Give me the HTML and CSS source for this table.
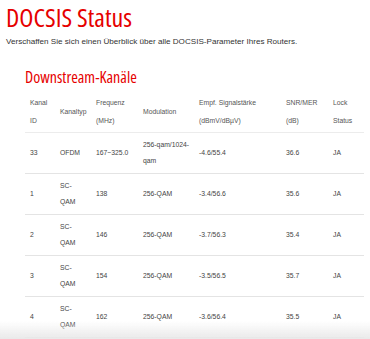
FILE: index.html
```html
<!DOCTYPE html>
<html lang="de">
<head>
<meta charset="utf-8">
<title>DOCSIS Status</title>
<link rel="stylesheet" href="styles.css">
</head>
<body>
<main class="page">
  <h1 class="title">DOCSIS Status</h1>
  <p class="intro">Verschaffen Sie sich einen Überblick über alle DOCSIS-Parameter Ihres Routers.</p>
  <section class="section">
    <h2 class="section-title">Downstream-Kanäle</h2>
    <table class="channels">
      <colgroup>
        <col class="c1"><col class="c2"><col class="c3"><col class="c4"><col class="c5"><col class="c6"><col class="c7">
      </colgroup>
      <thead>
        <tr>
          <th>Kanal ID</th>
          <th>Kanaltyp</th>
          <th>Frequenz (MHz)</th>
          <th>Modulation</th>
          <th>Empf. Signalstärke (dBmV/dBµV)</th>
          <th>SNR/MER (dB)</th>
          <th>Lock Status</th>
        </tr>
      </thead>
      <tbody>
        <tr><td>33</td><td>OFDM</td><td>167~325.0</td><td>256-qam/1024-qam</td><td>-4.6/55.4</td><td>36.6</td><td>JA</td></tr>
        <tr><td>1</td><td>SC-QAM</td><td>138</td><td>256-QAM</td><td>-3.4/56.6</td><td>35.6</td><td>JA</td></tr>
        <tr><td>2</td><td>SC-QAM</td><td>146</td><td>256-QAM</td><td>-3.7/56.3</td><td>35.4</td><td>JA</td></tr>
        <tr><td>3</td><td>SC-QAM</td><td>154</td><td>256-QAM</td><td>-3.5/56.5</td><td>35.7</td><td>JA</td></tr>
        <tr><td>4</td><td>SC-QAM</td><td>162</td><td>256-QAM</td><td>-3.6/56.4</td><td>35.5</td><td>JA</td></tr>
      </tbody>
    </table>
  </section>
</main>
<div class="bottom-fade"></div>
</body>
</html>
```

FILE: styles.css
```css
html, body {
  margin: 0;
  padding: 0;
  background: #fff;
}
body {
  font-family: "Liberation Sans", Arial, sans-serif;
  color: #333;
  overflow: hidden;
}
.page {
  padding: 2px 6px 0 6px;
}
.title {
  margin: 0;
  font-family: "Open Sans", sans-serif;
  font-stretch: 75%;
  font-weight: 400;
  font-size: 26px;
  line-height: 30px;
  color: #e60000;
}
.intro {
  margin: 3px 0 0 0;
  font-size: 8.1px;
  line-height: 14px;
  color: #333;
}
.section {
  padding: 0 0 0 19px;
}
.section-title {
  margin: 17px 0 0 0;
  font-family: "Open Sans", sans-serif;
  font-stretch: 75%;
  font-weight: 400;
  font-size: 16px;
  line-height: 22px;
  color: #e60000;
}
.channels {
  margin-top: 4px;
  width: 339px;
  border-collapse: collapse;
  table-layout: fixed;
  font-size: 6.8px;
  color: #444;
}
.c1 { width: 30px; }
.c2 { width: 36px; }
.c3 { width: 47px; }
.c4 { width: 56px; }
.c5 { width: 87px; }
.c6 { width: 47px; }
.c7 { width: 36px; }
.channels th,
.channels td {
  text-align: left;
  vertical-align: middle;
  padding: 0 4px 0 5px;
  font-weight: 400;
}
.channels th {
  height: 40px;
  line-height: 18px;
  color: #555;
  border-bottom: 1px solid #ececec;
}
.channels td {
  height: 40px;
  line-height: 16px;
  border-bottom: 1px solid #e4e4e4;
}
.bottom-fade {
  position: fixed;
  left: 0;
  right: 0;
  bottom: 0;
  height: 18px;
  background: linear-gradient(to bottom, rgba(235,235,235,0), rgba(232,232,232,0.95));
  pointer-events: none;
}
```
